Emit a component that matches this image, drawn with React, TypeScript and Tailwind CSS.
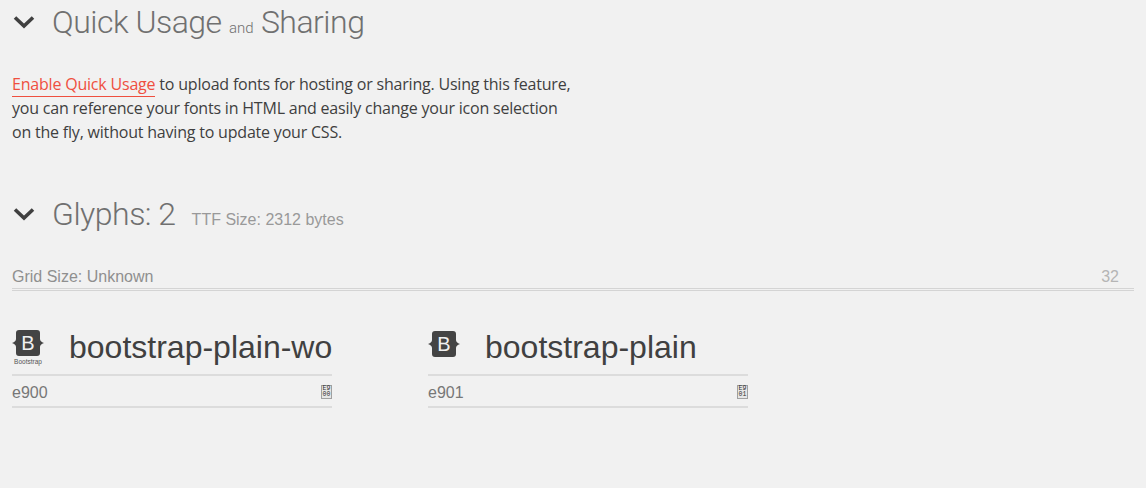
const Chevron = () => (
  <svg width="24" height="16" viewBox="0 0 24 16" className="shrink-0">
    <path d="M3 3.5 L12 12 L21 3.5" fill="none" stroke="#404040" strokeWidth="3.6" />
  </svg>
);

const BootstrapMark = ({ size }: { size: number }) => (
  <svg width={size} height={size} viewBox="0 0 32 32" className="block">
    <path
      d="M7 3 H25 Q28 3 28 6 V12 Q28 14.5 32 16 Q28 17.5 28 20 V26 Q28 29 25 29 H7 Q4 29 4 26 V20 Q4 17.5 0 16 Q4 14.5 4 12 V6 Q4 3 7 3 Z"
      fill="#444444"
    />
    <text x="16" y="23" textAnchor="middle" fontSize="20" fill="#f0f0f0" fontFamily="Liberation Sans">
      B
    </text>
  </svg>
);

const GlyphCard = ({ name, code, top, bottom, small }: { name: string; code: string; top: string; bottom: string; small?: boolean }) => (
  <div className="w-[320px] font-['Liberation_Sans',sans-serif]">
    <div className="h-[57px] flex items-center border-b-2 border-[#dcdcdc]">
      <div className="w-[57px] shrink-0">
        {small ? (
          <div className="w-[32px] h-[38px] mb-[2px] flex flex-col items-center">
            <div className="h-[31px]">
              <BootstrapMark size={32} />
            </div>
            <span className="text-[6.5px] leading-[7px] text-[#555]">Bootstrap</span>
          </div>
        ) : (
          <div className="pb-[6px]">
            <BootstrapMark size={32} />
          </div>
        )}
      </div>
      <span className="text-[32px] leading-none text-[#404040] whitespace-nowrap">{name}</span>
    </div>
    <div className="h-[32px] pt-[4px] flex items-center justify-between border-b-2 border-[#dcdcdc]">
      <span className="text-[16px] text-[#777]">{code}</span>
      <div className="w-[11px] h-[14px] -mt-[2px] bg-[#e6e6e6] border border-[#a0a0a0] flex flex-col items-center justify-center font-['Liberation_Mono',monospace] text-[6.5px] leading-[6px] text-[#333]">
        <span>{top}</span>
        <span>{bottom}</span>
      </div>
    </div>
  </div>
);

export default function App() {
  return (
    <div className="min-h-[488px] bg-[#f1f1f1] pl-[12px] pr-[12px] overflow-hidden">
      <div className="h-[44px] flex items-center gap-[16px] font-['Roboto',sans-serif] font-light text-[#707070]">
        <Chevron />
        <h1 className="text-[32px] leading-none whitespace-nowrap tracking-[-0.5px]">
          Quick Usage <span className="text-[15px] tracking-normal">and</span> Sharing
        </h1>
      </div>
      <p className="mt-[28px] w-[570px] text-[16px] leading-[24px] tracking-[-0.2px] text-[#3f3f3f] font-['Open_Sans',sans-serif] whitespace-nowrap">
        <a className="text-[#ef4f3f] border-b border-[#ef4f3f] pb-[1px]">Enable Quick Usage</a> to upload fonts for hosting or sharing. Using this feature,
        <br />
        you can reference your fonts in HTML and easily change your icon selection
        <br />
        on the fly, without having to update your CSS.
      </p>
      <div className="mt-[47px] h-[46px] flex items-center gap-[16px] text-[#707070]">
        <Chevron />
        <h2 className="text-[32px] leading-none tracking-[-0.5px] font-['Roboto',sans-serif] font-light whitespace-nowrap">Glyphs: 2</h2>
        <span className="text-[16px] text-[#999] font-['Liberation_Sans',sans-serif] mt-[12px]">TTF Size: 2312 bytes</span>
      </div>
      <div className="mt-[29px] h-[22px] flex items-center justify-between border-b-[3px] border-double border-[#d4d4d4] font-['Liberation_Sans',sans-serif] text-[16px] box-content pr-[3px]">
        <span className="text-[#8f8f8f]">Grid Size: Unknown</span>
        <span className="text-[#b5b5b5] mr-[12px]">32</span>
      </div>
      <div className="mt-[28px] flex gap-[96px]">
        <GlyphCard name="bootstrap-plain-wo" code="e900" top="E9" bottom="00" small />
        <GlyphCard name="bootstrap-plain" code="e901" top="E9" bottom="01" />
      </div>
    </div>
  );
}
